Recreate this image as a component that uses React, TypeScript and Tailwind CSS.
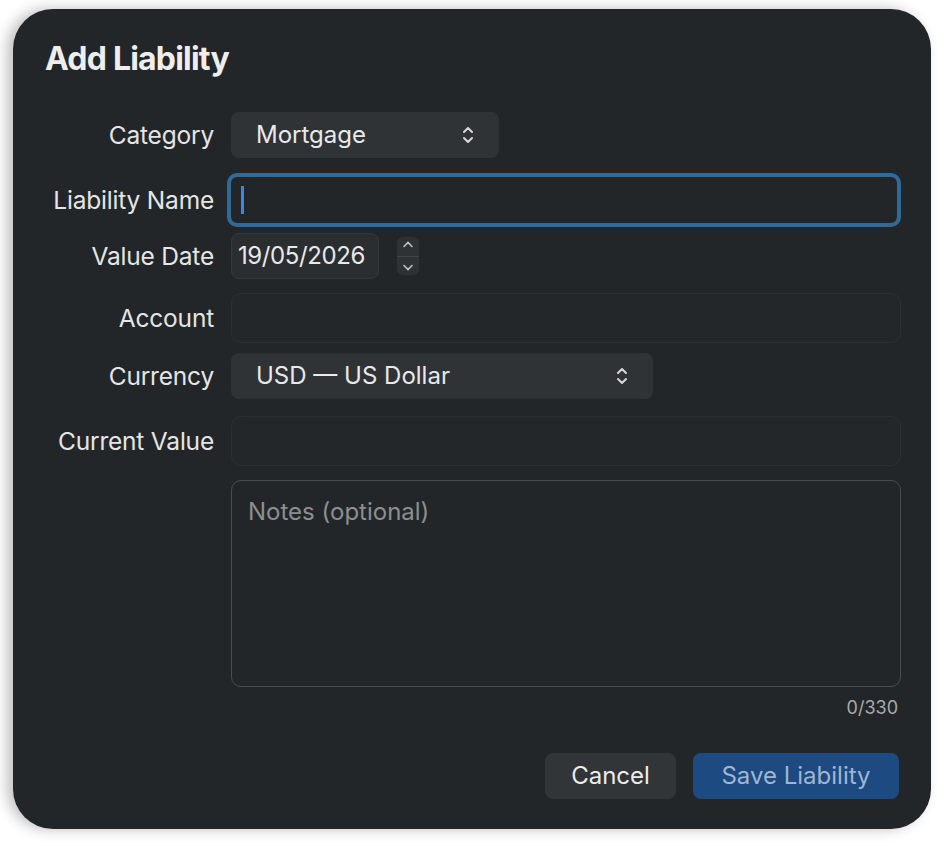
import React from 'react';

function Chevrons({ className = '' }: { className?: string }) {
  return (
    <svg viewBox="0 0 12 20" className={className} fill="none" stroke="currentColor" strokeWidth="2" strokeLinecap="round" strokeLinejoin="round">
      <path d="M2 7l4-4 4 4" />
      <path d="M2 13l4 4 4-4" />
    </svg>
  );
}

function Label({ children }: { children: React.ReactNode }) {
  return <div className="w-[218px] shrink-0 pr-[17px] text-right text-[24.5px] tracking-[-0.2px] text-[#e4e5e6]">{children}</div>;
}

export default function App() {
  return (
    <div className="min-h-[846px] w-[944px] bg-white pl-[13px] pt-[9px]" style={{ fontFamily: 'Inter, "Noto Sans", sans-serif' }}>
      <div className="h-[820px] w-[918px] rounded-[40px] bg-[#232628] shadow-[-6px_0_14px_rgba(0,0,0,0.25)] pl-[32px] pr-[30px] pt-[26px]">
        <h1 className="text-[32px] font-bold tracking-tight text-[#eeeeee]">Add Liability</h1>

        <div className="-ml-[32px] mt-[29px] flex flex-col">
          <div className="flex h-[46px] items-center">
            <Label>Category</Label>
            <div className="flex h-[46px] w-[268px] items-center justify-between rounded-[8px] bg-[#2f3335] px-[25px] text-[24px] text-[#e8e9ea]">
              Mortgage
              <Chevrons className="h-[22px] w-[12px] text-[#d8d8d8]" />
            </div>
          </div>

          <div className="mt-[15px] flex h-[54px] items-center">
            <Label>Liability Name</Label>
            <div className="-ml-[4px] flex h-[54px] w-[678px] items-center rounded-[10px] border-[4px] border-[#2f6a99] px-[10px]">
              <div className="h-[28px] w-[3px] bg-[#3a86e0]" />
            </div>
          </div>

          <div className="mt-[6px] flex h-[46px] items-center">
            <Label>Value Date</Label>
            <div className="flex h-[46px] w-[148px] items-center overflow-hidden whitespace-nowrap rounded-[8px] border border-[#35393b] bg-[#2b2e30] px-[6px] text-[24px] tracking-[-0.4px] text-[#e8e9ea]">19/05/2026</div>
            <div className="ml-[18px] flex h-[38px] w-[22px] flex-col items-center justify-between rounded-[6px] bg-[#2e3234] py-[3px] text-[#bfc2c4]">
              <svg viewBox="0 0 12 8" className="h-[9px] w-[12px]" fill="none" stroke="currentColor" strokeWidth="1.6" strokeLinecap="round"><path d="M2 6l4-4 4 4" /></svg>
              <div className="h-px w-full bg-[#444]" />
              <svg viewBox="0 0 12 8" className="h-[9px] w-[12px]" fill="none" stroke="currentColor" strokeWidth="1.6" strokeLinecap="round"><path d="M2 2l4 4 4-4" /></svg>
            </div>
          </div>

          <div className="mt-[14px] flex h-[50px] items-center">
            <Label>Account</Label>
            <div className="h-[50px] w-[670px] rounded-[10px] border border-[#2d3032] bg-[#24272a]" />
          </div>

          <div className="mt-[10px] flex h-[46px] items-center">
            <Label>Currency</Label>
            <div className="flex h-[46px] w-[422px] items-center justify-between rounded-[8px] bg-[#2f3335] px-[25px] text-[24px] text-[#e8e9ea]">
              USD — US Dollar
              <Chevrons className="h-[22px] w-[12px] text-[#d8d8d8]" />
            </div>
          </div>

          <div className="mt-[17px] flex h-[50px] items-center">
            <Label>Current Value</Label>
            <div className="h-[50px] w-[670px] rounded-[10px] border border-[#2d3032] bg-[#24272a]" />
          </div>

          <div className="mt-[14px] flex">
            <div className="w-[218px] shrink-0" />
            <div className="h-[207px] w-[670px] rounded-[10px] border border-[#4a4d50] px-[16px] pt-[13px] text-[24px] text-[#8c8f92]">Notes (optional)</div>
          </div>
          <div className="mt-[7px] w-[885px] text-right text-[18px] text-[#a8abad]">0/330</div>

          <div className="mt-[32px] flex w-[886px] justify-end gap-[17px]">
            <button className="h-[46px] w-[131px] rounded-[8px] bg-[#313537] text-[24px] text-[#ececec]">Cancel</button>
            <button className="h-[46px] w-[206px] rounded-[8px] bg-[#1d4a80] text-[24px] text-[#9fb6d2]">Save Liability</button>
          </div>
        </div>
      </div>
    </div>
  );
}
